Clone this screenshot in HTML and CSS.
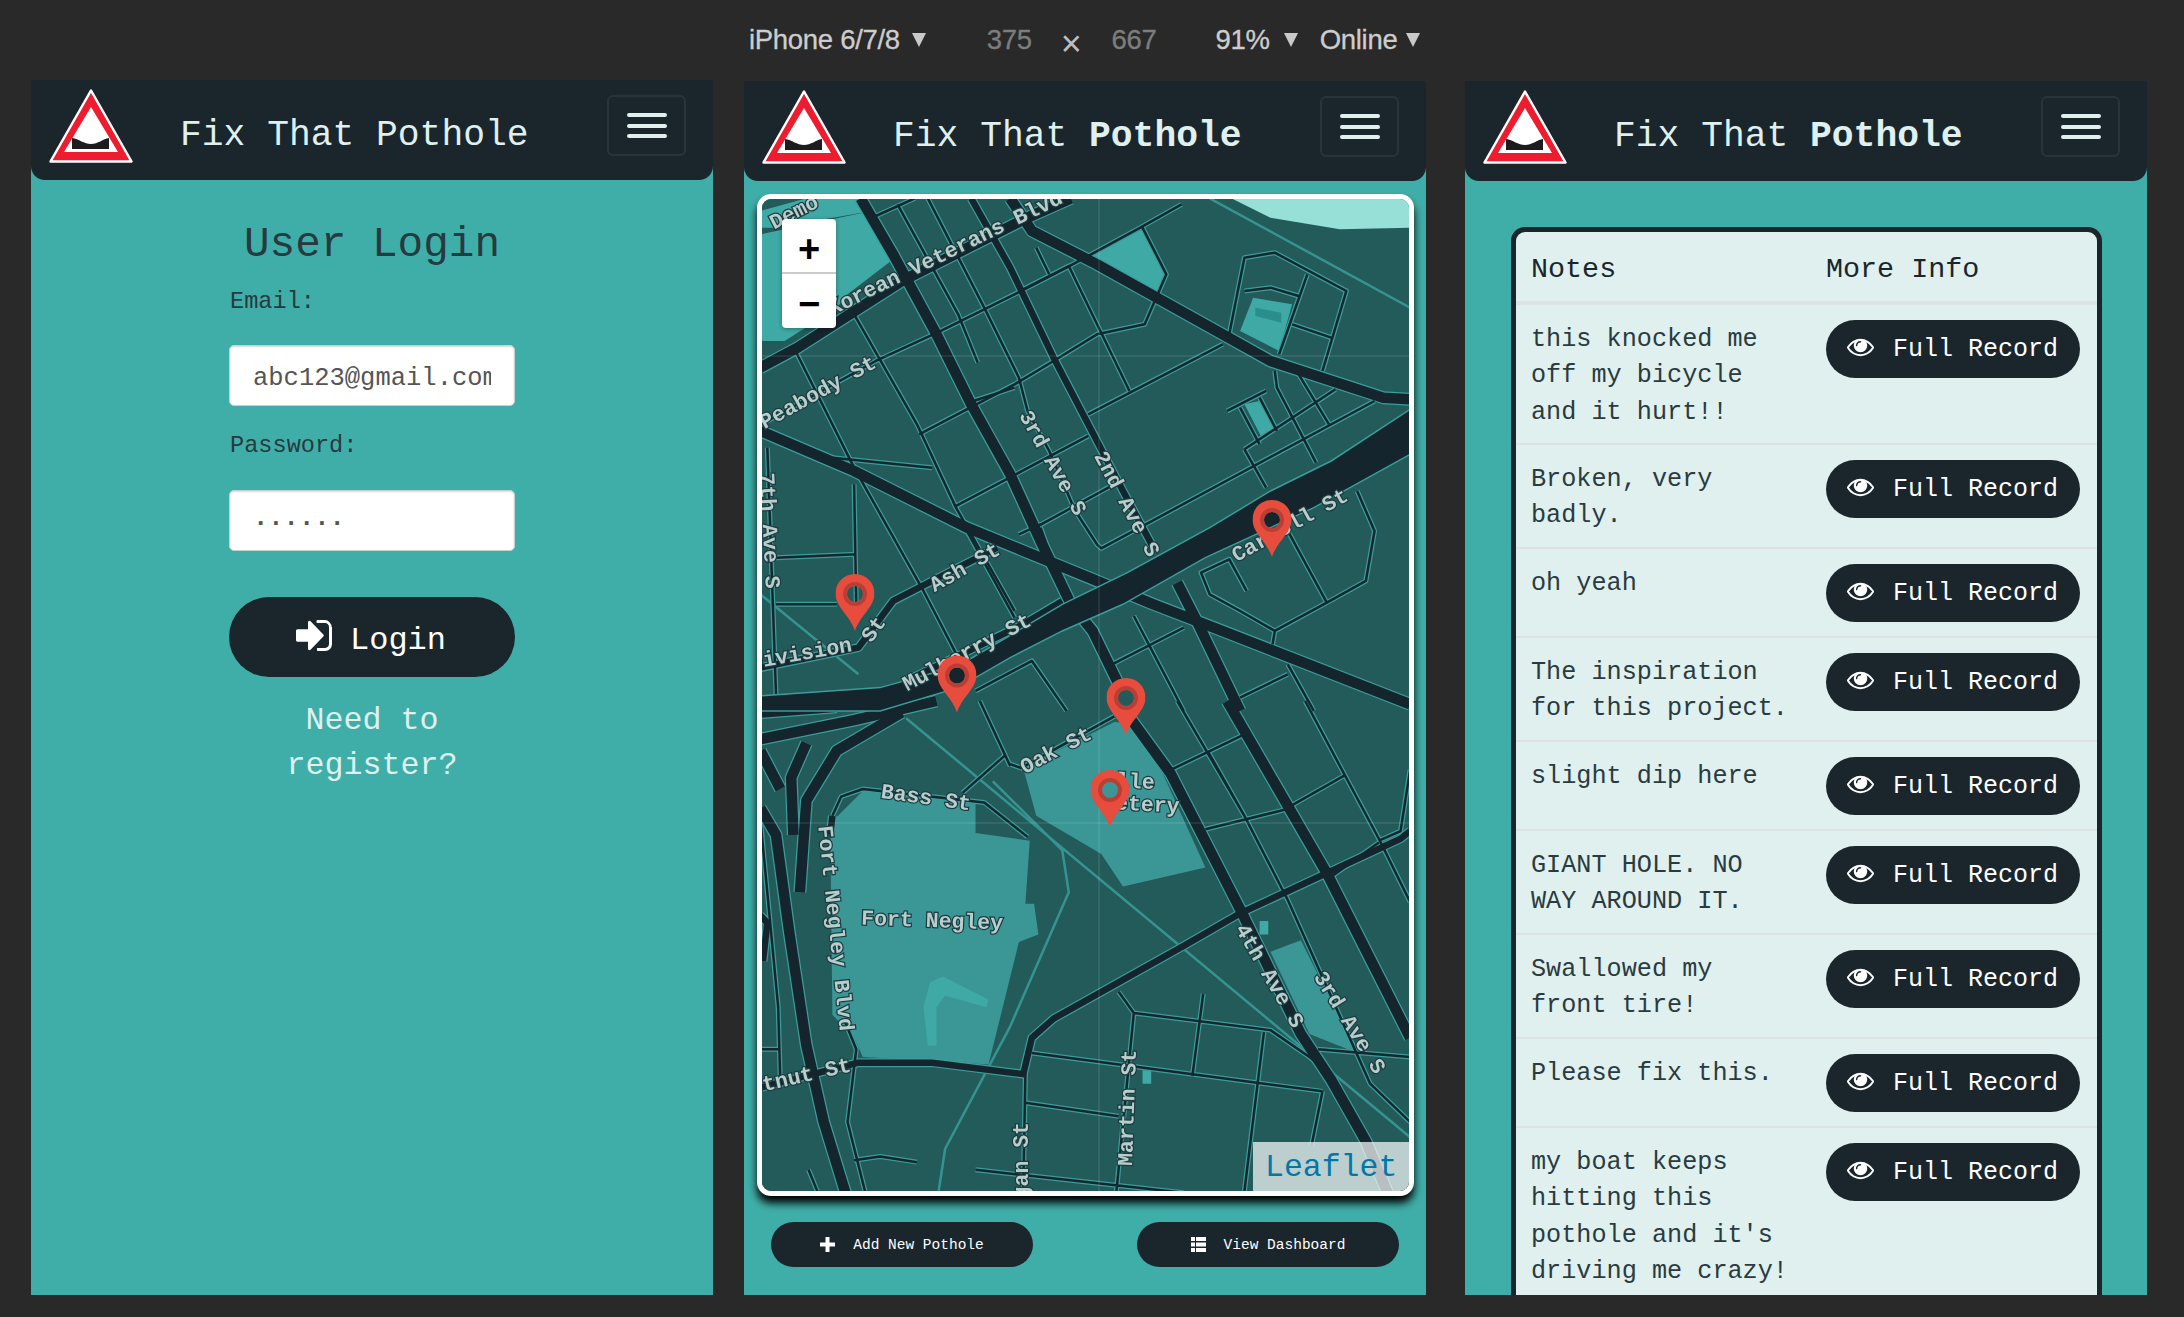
FILE: index.html
```html
<!DOCTYPE html>
<html lang="en">
<head>
<meta charset="utf-8">
<title>Fix That Pothole</title>
<link rel="stylesheet" href="styles.css">
</head>
<body>
<svg class="defs" width="0" height="0" aria-hidden="true">
  <defs>
    <symbol id="logo" viewBox="0 0 84 74">
      <path d="M42 1.5 L82.500 72.500 H1.500 Z" fill="#ed1c2e" stroke="#fff" stroke-width="2.500" stroke-linejoin="round"/>
      <path d="M42 18 L69 63 H15 Z" fill="#fff"/>
      <path d="M23 49 C30 50 35 55 42 55 C49 55 54 50 60 49 V60 H23 Z" fill="#1c1c1e"/>
    </symbol>
    <symbol id="eye" viewBox="0 0 1792 1792">
      <path fill="currentColor" d="M1664 960q-152-236-381-353 61 104 61 225 0 185-131.500 316.500t-316.500 131.500-316.500-131.500-131.500-316.500q0-121 61-225-229 117-381 353 133 205 333.500 326.500t434.500 121.500 434.500-121.500 333.500-326.500zm-720-384q0-20-14-34t-34-14q-125 0-214.500 89.500t-89.500 214.500q0 20 14 34t34 14 34-14 14-34q0-86 61-147t147-61q20 0 34-14t14-34zm848 384q0 34-20 69-140 230-376.500 368.500t-499.500 138.500-499.500-139-376.500-368q-20-35-20-69t20-69q140-229 376.500-368t499.500-139 499.500 139 376.500 368q20 35 20 69z"/>
    </symbol>
    <symbol id="signin" viewBox="0 0 1536 1280" preserveAspectRatio="none">
      <path fill="currentColor" transform="translate(0 -256)" d="M1184 896q0 26-19 45l-544 544q-19 19-45 19t-45-19-19-45v-288h-448q-26 0-45-19t-19-45v-384q0-26 19-45t45-19h448v-288q0-26 19-45t45-19 45 19l544 544q19 19 19 45zm352-352v704q0 119-84.500 203.500t-203.500 84.500h-320q-13 0-22.500-9.500t-9.500-22.500q0-4-1-20t-.5-26.500 3-23.500 10-19.500 20.500-6.500h320q66 0 113-47t47-113v-704q0-66-47-113t-113-47h-288-11-13q-2 0-11-.5t-13-1-11.500-2-9.500-2.500-7-4.500-5-7-1.500-10.500q0-4-1-20t-.5-26.500 3-23.500 10-19.500 20.500-6.500h320q119 0 203.500 84.500t84.500 203.500z"/>
    </symbol>
    <symbol id="pin" viewBox="0 0 39 57">
      <path class="pin-body" fill-rule="evenodd" d="M19.500 57 C15 42 0 33 0 19.500 C0 8.500 8.500 0 19.500 0 C30.500 0 39 8.500 39 19.500 C39 33 24 42 19.500 57 Z M19.500 12 A8 8 0 1 0 19.500 28 A8 8 0 1 0 19.500 12 Z"/>
      <circle class="pin-ring" cx="19.500" cy="20" r="10"/>
    </symbol>
  </defs>
</svg>

<header class="devbar">
  <span class="dev dev-name">iPhone 6/7/8</span><i class="tri tri-a"></i>
  <span class="dev dim dev-w">375</span><span class="dev times">×</span><span class="dev dim dev-h">667</span>
  <span class="dev dev-zoom">91%</span><i class="tri tri-b"></i>
  <span class="dev dev-net">Online</span><i class="tri tri-c"></i>
</header>

<main class="phones">
  <section class="phone phone-login">
    <nav class="nav">
      <svg class="logo"><use href="#logo"/></svg>
      <div class="brand">Fix That Pothole</div>
      <button class="toggler" type="button" aria-label="Menu"><span></span><span></span><span></span></button>
    </nav>
    <form class="login">
      <h1 class="login-title">User Login</h1>
      <label class="field-label first">Email:</label>
      <input class="field" type="text" value="abc123@gmail.com">
      <label class="field-label">Password:</label>
      <input class="field dots" type="text" value="······">
      <button class="login-btn" type="button"><svg class="signin"><use href="#signin"/></svg><span class="login-text">Login</span></button>
      <a class="register">Need to<br>register?</a>
    </form>
  </section>

  <section class="phone phone-map">
    <nav class="nav">
      <svg class="logo"><use href="#logo"/></svg>
      <div class="brand">Fix That <b>Pothole</b></div>
      <button class="toggler" type="button" aria-label="Menu"><span></span><span></span><span></span></button>
    </nav>
    <div class="map">
      <svg class="tiles" viewBox="762 198 648 993" width="648" height="993">
        <defs>
          <g id="minor" class="road">
            <g transform="translate(750 190) scale(.4337 .3333)">
              <path d="M290 75L380 22M340 40L480 370L525 515M410 22L540 350L620 560L640 660L690 780L750 960L800 1060L810 1072L1440 630"/>
              <path d="M40 690L290 510L440 420L610 310L730 230L900 110L995 40M390 730L610 580L700 510L800 430L910 400L960 250L905 110"/>
              <path d="M475 945L780 735M780 670L1090 460M665 1005L840 880M515 630L610 590M240 370L385 700L475 950L610 1260M105 480L240 830L400 1200L480 1400"/>
              <path d="M240 880L245 1240M60 1100L245 1090M60 1240L200 1240M40 770L60 1510M190 800L420 830"/>
              <path d="M1105 430L1140 200L1210 185L1375 300L1320 540M1140 300L1200 290L1265 315M1285 250L1220 490M1250 400L1340 440"/>
              <path d="M1100 660L1190 600M1130 650L1175 760M1175 620L1215 720M1140 775L1350 595M1140 775L1190 890M1210 540L1215 590L1305 815M1265 550L1335 700"/>
              <path d="M1400 900L1440 1020L1420 1170L1330 1235L1210 1320L1130 1260L1060 1210L1040 1145L1105 1105L1145 1200M1240 1020L1330 1235M1210 1320L1205 1360"/>
              <path d="M670 1010L730 1230M500 1020L610 1280M885 1275L1000 1560M835 1420L1000 1310M1130 1520L1240 1450M1240 1420L1300 1560M520 1500L650 1410L730 1560"/>
              <path d="M660 170L690 250M630 295L735 225L875 600M620 1030L670 1000"/>
            </g>
            <g transform="translate(750 700) scale(.4337 .3827)">
              <path d="M600 170L530 0M600 165L625 175L840 40M490 240L590 140M190 300L210 250L260 230L540 265L640 355"/>
              <path d="M850 760L885 815L1200 860L1290 930L1340 980M885 815L845 1280M1045 765L1020 980M650 920L1320 1020M1185 865L1140 1280M1320 1020L1295 1160M635 975L630 1280M635 1050L850 1085M520 1225L1000 1285M240 1200L300 1190L385 1205M135 1225L155 1280M220 840L245 910L225 1100L265 1280"/>
              <path d="M970 180L1135 90M985 0L1140 300L1240 520L1430 1000L1522 1100M1050 335L1230 285L1370 195M1045 335L1135 560M1345 455L1450 370M1280 0L1450 360L1522 525M1310 910L1522 930M1522 180L1500 340L1450 365M1055 130L1140 300"/>
              <path d="M24 310L65 800L70 1000M24 910H70"/>
            </g>
          </g>
          <g id="medium" class="road">
            <g transform="translate(750 190) scale(.4337 .3333)">
              <path d="M24 1430L250 1370L330 1230L420 1170L570 1070M360 1470L630 1300L720 1230"/>
              <path d="M510 22L600 230L700 500L800 750L860 900L930 1070"/>
            </g>
            <g transform="translate(750 700) scale(.4337 .3827)">
              <path d="M24 1010L250 945L420 945L630 975L650 880L700 830L1000 640L1130 555L1500 360L1522 340"/>
              <path d="M190 300L185 350M24 560L40 580L30 680"/>
            </g>
          </g>
          <g id="major" class="road">
            <g transform="translate(750 190) scale(.4337 .3333)">
              <path d="M255 22L330 190L430 430L510 640L600 850L670 1050L740 1240L790 1320L850 1480"/>
              <path d="M600 22L650 120L800 220L1090 430L1200 510L1460 620L1522 625"/>
              <path d="M24 720L240 840L500 1010L800 1170L930 1240L1050 1300L1522 1540"/>
              <path d="M24 530L110 470L350 270L640 80L740 22"/>
              <path d="M985 1175L1030 1290L1130 1560"/>
            </g>
            <g transform="translate(750 700) scale(.4337 .3827)">
              <path d="M880 50L970 190L1135 555L1270 870L1340 990L1420 1150L1470 1285"/>
              <path d="M1100 0L1330 450L1522 880"/>
              <path d="M24 280L60 350L90 600L130 900L170 1100L220 1285"/>
              <path d="M130 110L95 200L100 350M24 130L70 230"/>
              <path d="M350 30L200 130L130 260L115 500"/>
              <path d="M24 30L200 15M24 100L240 50L430 0"/>
            </g>
          </g>
        </defs>

        <rect class="land" x="762" y="198" width="648" height="993"/>

        <g transform="translate(750 190) scale(.4337 .3333)">
          <path class="water" d="M1110 22L1200 80L1360 115L1522 110V22Z"/>
          <path class="park" d="M24 130L280 60L325 210L225 310L200 350L80 450H24Z"/>
          <path class="park" d="M130 22H250L280 60L60 110L24 110V60Z"/>
          <path class="park" d="M780 195L905 115L960 250L935 310Z"/>
          <path class="park" d="M1130 420L1160 320L1250 340L1220 480Z"/>
          <path class="park" d="M1140 640L1175 630L1210 710L1180 740Z"/>
          <path class="land-fill" d="M1165 350L1225 365L1225 395L1165 375Z"/>
        </g>
        <g transform="translate(750 700) scale(.4337 .3827)">
          <path class="grounds" d="M185 320L260 235L520 265V345L645 365L635 530L655 530L665 610L620 630L550 950L260 930L240 880L190 820Z"/>
          <path class="grounds" d="M630 175L840 55L900 60L1050 435L860 485L810 400L660 300Z"/>
          <path class="grounds" d="M1200 655L1270 625L1400 920L1290 870Z"/>
          <path class="park" d="M410 900L400 800L415 735L445 720L550 780L545 800L450 770L430 800L430 900Z"/>
          <path class="park" d="M905 965H925V1000H905ZM1175 575H1195V610H1175Z"/>
        </g>

        <use href="#minor" class="ink case-minor"/>
        <use href="#medium" class="ink case-medium"/>
        <use href="#major" class="ink case-major"/>
        <g transform="translate(750 700) scale(.4337 .3827)" class="path-line">
          <path d="M360 45L1522 1140M560 210L720 390L735 500L600 850L450 1170L435 1280"/>
        </g>
        <g transform="translate(750 190) scale(.4337 .3333)" class="path-line">
          <path d="M1060 22L1522 350M24 1210L250 1450"/>
        </g>
        <use href="#minor" class="ink ink-minor"/>
        <use href="#medium" class="ink ink-medium"/>
        <use href="#major" class="ink ink-major"/>
        <g transform="translate(750 190) scale(.4337 .3333)">
          <path class="freeway" d="M1522 655L1340 810L1200 900L1060 1010L870 1145L720 1240L630 1310L480 1425L300 1490L24 1515V1560H300L480 1490L600 1400L720 1320L860 1240L1050 1100L1300 950L1522 790Z"/>
        </g>

        <line class="seam" x1="1099" y1="198" x2="1099" y2="1191"/>
        <line class="seam" x1="762" y1="355" x2="1410" y2="355"/>
        <line class="seam" x1="762" y1="822" x2="1410" y2="822"/>

        <g class="labels">
          <text transform="translate(797 217) rotate(-27)">Demo</text>
          <text transform="translate(948 258) rotate(-26)">Korean Veterans Blvd</text>
          <text transform="translate(821 397) rotate(-29)">Peabody St</text>
          <text transform="translate(763 530) rotate(87)">7th Ave S</text>
          <text transform="translate(1047 465) rotate(61)">3rd Ave S</text>
          <text transform="translate(1121 506) rotate(62)">2nd Ave S</text>
          <text transform="translate(968 572) rotate(-30)">Ash St</text>
          <text transform="translate(802 659) rotate(-10)">Division</text>
          <text transform="translate(879 632) rotate(-55)">St</text>
          <text transform="translate(970 657) rotate(-28)">Mulberry St</text>
          <text transform="translate(1293 530) rotate(-29)">Carroll St</text>
          <text transform="translate(1059 755) rotate(-28)">Oak St</text>
          <text transform="translate(925 803) rotate(8)">Bass St</text>
          <text transform="translate(932 926) rotate(2)">Fort Negley</text>
          <text transform="translate(829 928) rotate(84)">Fort Negley Blvd</text>
          <text class="end" transform="translate(852 1070) rotate(-13)">Chestnut St</text>
          <text transform="translate(1264 978) rotate(60)">4th Ave S</text>
          <text transform="translate(1344 1025) rotate(58)">3rd Ave S</text>
          <text transform="translate(1134 1107) rotate(-88)">Martin St</text>
          <text class="end" transform="translate(1028 1121) rotate(-90)">Morgan St</text>
          <text transform="translate(1135 787) rotate(3)">lle</text>
          <text transform="translate(1147 810) rotate(3)">etery</text>
        </g>

        <use href="#pin" x="835.500" y="573" width="39" height="57"/>
        <use href="#pin" x="1252.500" y="499" width="39" height="57"/>
        <use href="#pin" x="937.500" y="654.500" width="39" height="57"/>
        <use href="#pin" x="1106.500" y="677" width="39" height="57"/>
        <use href="#pin" x="1090.500" y="769" width="39" height="57"/>
      </svg>
      <div class="zoomctl"><a class="zoom-in">+</a><a class="zoom-out">−</a></div>
      <div class="attribution">Leaflet</div>
    </div>
    <div class="actions">
      <button class="action" type="button">
        <svg class="action-icon" viewBox="0 0 15 15"><path d="M5.500 0H9.500V5.500H15V9.500H9.500V15H5.500V9.500H0V5.500H5.500Z"/></svg>Add New Pothole
      </button>
      <button class="action" type="button">
        <svg class="action-icon" viewBox="0 0 15 15"><path d="M0 0H4V4H0ZM5 0H15V4H5ZM0 5.500H4V9.500H0ZM5 5.500H15V9.500H5ZM0 11H4V15H0ZM5 11H15V15H5Z"/></svg>View Dashboard
      </button>
    </div>
  </section>

  <section class="phone phone-table">
    <nav class="nav">
      <svg class="logo"><use href="#logo"/></svg>
      <div class="brand">Fix That <b>Pothole</b></div>
      <button class="toggler" type="button" aria-label="Menu"><span></span><span></span><span></span></button>
    </nav>
    <div class="card">
      <table class="records">
        <thead><tr><th class="col-notes">Notes</th><th class="col-info">More Info</th></tr></thead>
        <tbody>
          <tr><td class="note">this knocked me off my bicycle and it hurt!!</td><td class="info"><a class="record"><svg class="eye"><use href="#eye"/></svg>Full Record</a></td></tr>
          <tr><td class="note">Broken, very badly.</td><td class="info"><a class="record"><svg class="eye"><use href="#eye"/></svg>Full Record</a></td></tr>
          <tr><td class="note">oh yeah</td><td class="info"><a class="record"><svg class="eye"><use href="#eye"/></svg>Full Record</a></td></tr>
          <tr><td class="note">The inspiration for this project.</td><td class="info"><a class="record"><svg class="eye"><use href="#eye"/></svg>Full Record</a></td></tr>
          <tr><td class="note">slight dip here</td><td class="info"><a class="record"><svg class="eye"><use href="#eye"/></svg>Full Record</a></td></tr>
          <tr><td class="note">GIANT HOLE. NO WAY AROUND IT.</td><td class="info"><a class="record"><svg class="eye"><use href="#eye"/></svg>Full Record</a></td></tr>
          <tr><td class="note">Swallowed my front tire!</td><td class="info"><a class="record"><svg class="eye"><use href="#eye"/></svg>Full Record</a></td></tr>
          <tr><td class="note">Please fix this.</td><td class="info"><a class="record"><svg class="eye"><use href="#eye"/></svg>Full Record</a></td></tr>
          <tr><td class="note">my boat keeps hitting this pothole and it's driving me crazy!</td><td class="info"><a class="record"><svg class="eye"><use href="#eye"/></svg>Full Record</a></td></tr>
        </tbody>
      </table>
    </div>
  </section>
</main>
</body>
</html>
```
FILE: styles.css
```css
* { box-sizing: border-box; }
html, body { margin: 0; height: 100%; }
body {
  width: 2184px;
  height: 1317px;
  overflow: hidden;
  background: #292929;
  font-family: "Liberation Mono", "DejaVu Sans Mono", monospace;
  color: #1a262c;
}
.defs { display: block; height: 0; }

/* device toolbar */
.devbar {
  height: 80px;
  display: flex;
  align-items: flex-start;
  padding: 24px 0 0 749px;
  font-family: "Liberation Sans", Arial, sans-serif;
  font-size: 27.500px;
  line-height: 32px;
  letter-spacing: -0.3px;
  color: #cdcdcd;
  -webkit-text-stroke: .3px currentColor;
}
.dev { display: block; }
.dim { color: #7d7d7d; }
.tri {
  display: block;
  width: 0;
  height: 0;
  margin-top: 9px;
  border-left: 7px solid transparent;
  border-right: 7px solid transparent;
  border-top: 14px solid #c9c9c9;
}
.tri-a { margin-left: 12px; }
.dev-w { margin-left: 61px; }
.times { margin-left: 29px; margin-top: 4px; font-size: 36px; color: #bdbdbd; -webkit-text-stroke: 0; }
.dev-h { margin-left: 30px; }
.dev-zoom { margin-left: 59px; }
.tri-b { margin-left: 14px; }
.dev-net { margin-left: 22px; }
.tri-c { margin-left: 9px; }

/* phones */
.phones { display: flex; align-items: flex-start; padding-left: 31px; }
.phone {
  flex: none;
  width: 682px;
  height: 1215px;
  background: #40aea8;
  overflow: hidden;
}
.phone-map { margin-left: 31px; margin-top: 1px; height: 1214px; }
.phone-table { margin-left: 39px; margin-top: 1px; height: 1214px; }

.nav {
  position: relative;
  height: 100px;
  background: #1a262c;
  border-radius: 0 0 14px 14px;
  display: flex;
  align-items: flex-start;
  color: #dff0ef;
}
.logo { width: 84px; height: 74px; margin: 9px 0 0 18px; flex: none; }
.brand {
  margin: 34px 0 0 47px;
  font-size: 36.300px;
  line-height: 44px;
  white-space: pre;
}
.brand b { font-weight: 700; }
.toggler {
  margin: 15px 27px 0 auto;
  width: 79px;
  height: 61px;
  background: transparent;
  border: 2px solid #2c3338;
  border-radius: 6px;
  padding: 16px 18px 0;
  display: flex;
  flex-direction: column;
  gap: 6.500px;
}
.toggler span { display: block; height: 4px; width: 40px; background: #dff0ef; border-radius: 2px; }

/* login */
.login { display: flex; flex-direction: column; align-items: center; }
.login-title {
  margin: 40px 0 0;
  font-size: 42.700px;
  line-height: 50px;
  font-weight: 400;
  color: #263a3f;
}
.field-label {
  align-self: flex-start;
  margin: 26px 0 0 199px;
  font-size: 23.600px;
  line-height: 28px;
  color: #263a3f;
}
.field-label.first { margin-top: 18px; }
.field {
  display: block;
  width: 286px;
  height: 61px;
  margin-top: 29px;
  padding: 6px 23px 0 23px;
  border: 1px solid #c8cfd0;
  border-radius: 5px;
  background: #fff;
  box-shadow: inset 0 1px 2px rgba(0,0,0,.15);
  font-family: inherit;
  font-size: 25.500px;
  color: #555;
}
.field-label + .field + .field-label + .field { margin-top: 30px; }
.dots { font-weight: 700; }
.login-btn {
  display: flex;
  align-items: center;
  justify-content: center;
  gap: 18px;
  width: 286px;
  height: 80px;
  margin-top: 46px;
  border: 0;
  border-radius: 40px;
  background: #1a262c;
  color: #fff;
  font-family: inherit;
  font-size: 32px;
  padding: 0 2px 0 0;
}
.login-text { position: relative; top: 3px; }
.signin { width: 36px; height: 31px; margin-top: -3px; color: #fff; }
.register {
  margin-top: 22px;
  font-size: 31.700px;
  line-height: 45px;
  text-align: center;
  color: #dff0ef;
}

/* map */
.map {
  position: relative;
  width: 657px;
  height: 1002px;
  margin: 13px 0 0 13px;
  border: 5px solid #fff;
  border-radius: 14px;
  box-shadow: 0 7px 8px #000;
  overflow: hidden;
  background: #235b5b;
}
.tiles { display: block; filter: blur(.5px); }
.land { fill: #235b5b; }
.land-fill { fill: #2a8f8c; }
.water { fill: #97e0d8; }
.park { fill: #3fa9a5; }
.grounds { fill: #3a9796; }
.road path, .path-line path { fill: none; vector-effect: non-scaling-stroke; stroke-linejoin: round; }
.ink { fill: none; }
.case-minor { stroke: #3a9d9a; stroke-width: 5px; }
.ink-minor { stroke: #14262e; stroke-width: 2.500px; }
.case-medium { stroke: #3a9d9a; stroke-width: 9px; }
.ink-medium { stroke: #15252d; stroke-width: 6.500px; }
.case-major { stroke: #3a9d9a; stroke-width: 13px; }
.ink-major { stroke: #15252d; stroke-width: 10.500px; }
.path-line { stroke: #359391; stroke-width: 2.500px; }
.freeway { fill: #15252d; stroke: #3a9d9a; stroke-width: 1.500px; vector-effect: non-scaling-stroke; }
.seam { stroke: rgba(255,255,255,.16); stroke-width: 1px; }
.labels text {
  font-family: "Liberation Mono", monospace;
  font-size: 21.500px;
  font-weight: 700;
  fill: #b9cdcb;
  text-anchor: middle;
  stroke: #1d3c42;
  stroke-width: 2.500px;
  paint-order: stroke;
}
.labels text.end { text-anchor: end; }
.pin-body { fill: #e74c3c; }
.pin-ring { fill: none; stroke: #b93f36; stroke-width: 4px; }

.zoomctl {
  position: absolute;
  left: 20px;
  top: 20px;
  width: 54px;
  height: 109px;
  background: #fff;
  border-radius: 4px;
  box-shadow: 0 1px 4px rgba(0,0,0,.35);
  display: flex;
  flex-direction: column;
  font-family: "Liberation Sans", Arial, sans-serif;
  font-weight: 700;
  color: #000;
}
.zoomctl a {
  display: block;
  height: 54.500px;
  font-size: 38px;
  line-height: 60px;
  text-align: center;
}
.zoom-in { border-bottom: 2px solid #ccc; }
.attribution {
  position: absolute;
  right: 0;
  bottom: 0;
  width: 156px;
  height: 49px;
  padding-left: 12px;
  background: rgba(255,255,255,.7);
  color: #0078a8;
  font-size: 31.500px;
  line-height: 52px;
}

.actions { display: flex; gap: 104px; margin: 26px 0 0 27px; }
.action {
  display: flex;
  align-items: center;
  justify-content: center;
  gap: 18px;
  width: 262px;
  height: 45px;
  border: 0;
  border-radius: 23px;
  background: #1a262c;
  color: #fff;
  font-family: inherit;
  font-size: 14.500px;
  padding: 0;
}
.action-icon { width: 15px; height: 15px; fill: #fff; }

/* records */
.card {
  width: 591px;
  margin: 46px 0 0 46px;
  border: 5px solid #1a262c;
  border-bottom: 0;
  border-radius: 14px 14px 0 0;
  background: #dff0ef;
  overflow: hidden;
}
.records { width: 581px; table-layout: fixed; border-collapse: separate; border-spacing: 0; }
.col-notes { width: 295px; }
.records th {
  height: 73px;
  padding: 5px 0 0 15px;
  border-bottom: 4px solid #dee2e4;
  font-size: 28.400px;
  font-weight: 400;
  text-align: left;
  color: #1a262c;
}
.col-info.col-info { padding-left: 15px; }
.records td {
  padding: 16.500px 15px 12.500px 15px;
  border-bottom: 2px solid #dee2e4;
  vertical-align: top;
  font-size: 25.200px;
  line-height: 36.500px;
  color: #2a3b40;
}
.records td.info { padding: 14.500px 0 14.500px 15px; }
.records tbody tr:first-child td.note { padding-bottom: 12px; }
.record {
  display: flex;
  align-items: center;
  width: 254px;
  height: 58px;
  padding: 2px 0 0 21px;
  gap: 19px;
  border-radius: 29px;
  background: #1a262c;
  color: #fff;
  font-size: 25px;
  line-height: 56px;
}
.eye { width: 27px; height: 27px; margin-top: -7px; color: #fff; flex: none; }
```
